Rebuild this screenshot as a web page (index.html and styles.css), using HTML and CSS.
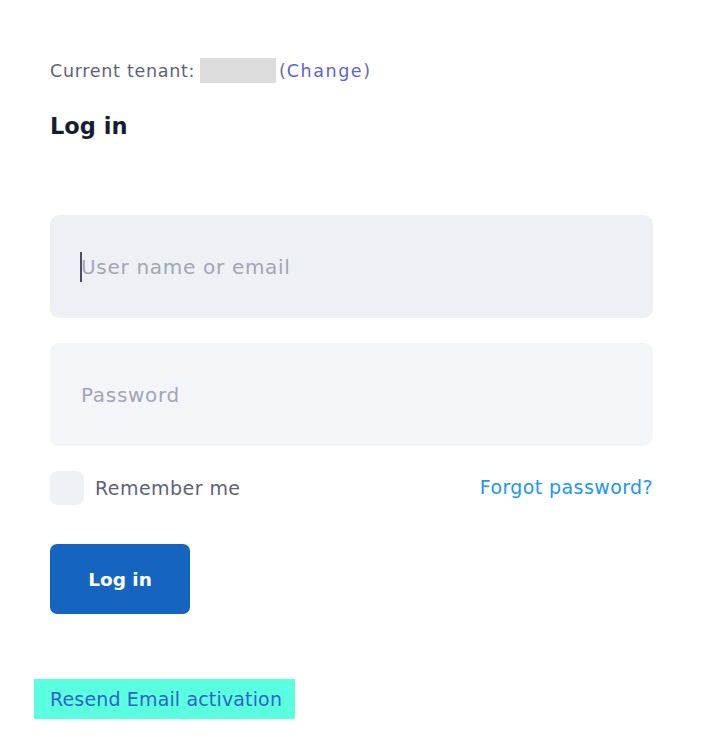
FILE: index.html
```html
<!DOCTYPE html>
<html>
<head>
<meta charset="utf-8">
<link rel="stylesheet" href="styles.css">
</head>
<body>
<div class="page">
  <div class="tenant">Current tenant:<span class="tenant-name"></span><span class="paren">(</span><a class="change" href="#">Change</a><span class="paren">)</span></div>
  <h1 class="title">Log in</h1>
  <form class="form">
    <div class="field field-active"><span class="caret"></span><span class="placeholder">User name or email</span></div>
    <div class="field"><span class="placeholder">Password</span></div>
    <div class="row">
      <label class="remember"><span class="check"></span><span>Remember me</span></label>
      <a class="forgot" href="#">Forgot password?</a>
    </div>
    <button class="btn" type="button">Log in</button>
  </form>
  <div class="resend"><a href="#">Resend Email activation</a></div>
</div>
</body>
</html>
```
FILE: styles.css
```css
* { box-sizing: border-box; }
html, body { margin: 0; padding: 0; background: #fff; }
body { font-family: "DejaVu Sans", "Liberation Sans", sans-serif; }
.page { width: 603px; margin-left: 50px; padding-top: 58px; }
.tenant { display: flex; align-items: center; height: 25px; font-size: 17.5px; letter-spacing: 0.7px; color: #5e6278; }
.tenant-name { display: inline-block; width: 76px; height: 25px; background: #dcdcdc; margin-left: 5px; margin-right: 3px; }
.paren { color: #6b6b9e; }
.change { color: #5b63d3; text-decoration: none; letter-spacing: 1.6px; }
.title { margin: 28px 0 0; font-size: 22.5px; line-height: 30px; font-weight: 700; color: #181c32; }
.form { margin-top: 74px; display: flex; flex-direction: column; }
.field { height: 103px; border-radius: 9px; background: #f3f6f9; display: flex; align-items: center; padding-left: 31px; position: relative; }
.field + .field { margin-top: 25px; }
.field-active { background: #edf1f6; }
.caret { position: absolute; left: 30px; top: 37px; width: 2px; height: 30px; background: #4b4d68; }
.placeholder { font-size: 20px; letter-spacing: 0.7px; color: #a1a5b7; }
.row { display: flex; justify-content: space-between; align-items: center; margin-top: 25px; height: 34px; }
.remember { display: flex; align-items: center; gap: 11px; font-size: 19px; letter-spacing: 0.45px; color: #5e6278; }
.check { width: 34px; height: 34px; border-radius: 8px; background: #eef1f5; }
.forgot { font-size: 19px; letter-spacing: 0.4px; color: #2196f3; text-decoration: none; margin-top: -3px; }
.btn { margin-top: 39px; width: 140px; height: 70px; border: 0; border-radius: 7px; background: #1565c0; color: #fff; font-family: inherit; font-size: 18.5px; font-weight: 700; }
.resend { margin-top: 65px; margin-left: -16px; width: 261px; height: 40px; background: #5affdf; display: flex; align-items: center; padding-left: 16px; }
.resend a { font-size: 19px; letter-spacing: 0.15px; color: #3063c7; text-decoration: none; }
```
